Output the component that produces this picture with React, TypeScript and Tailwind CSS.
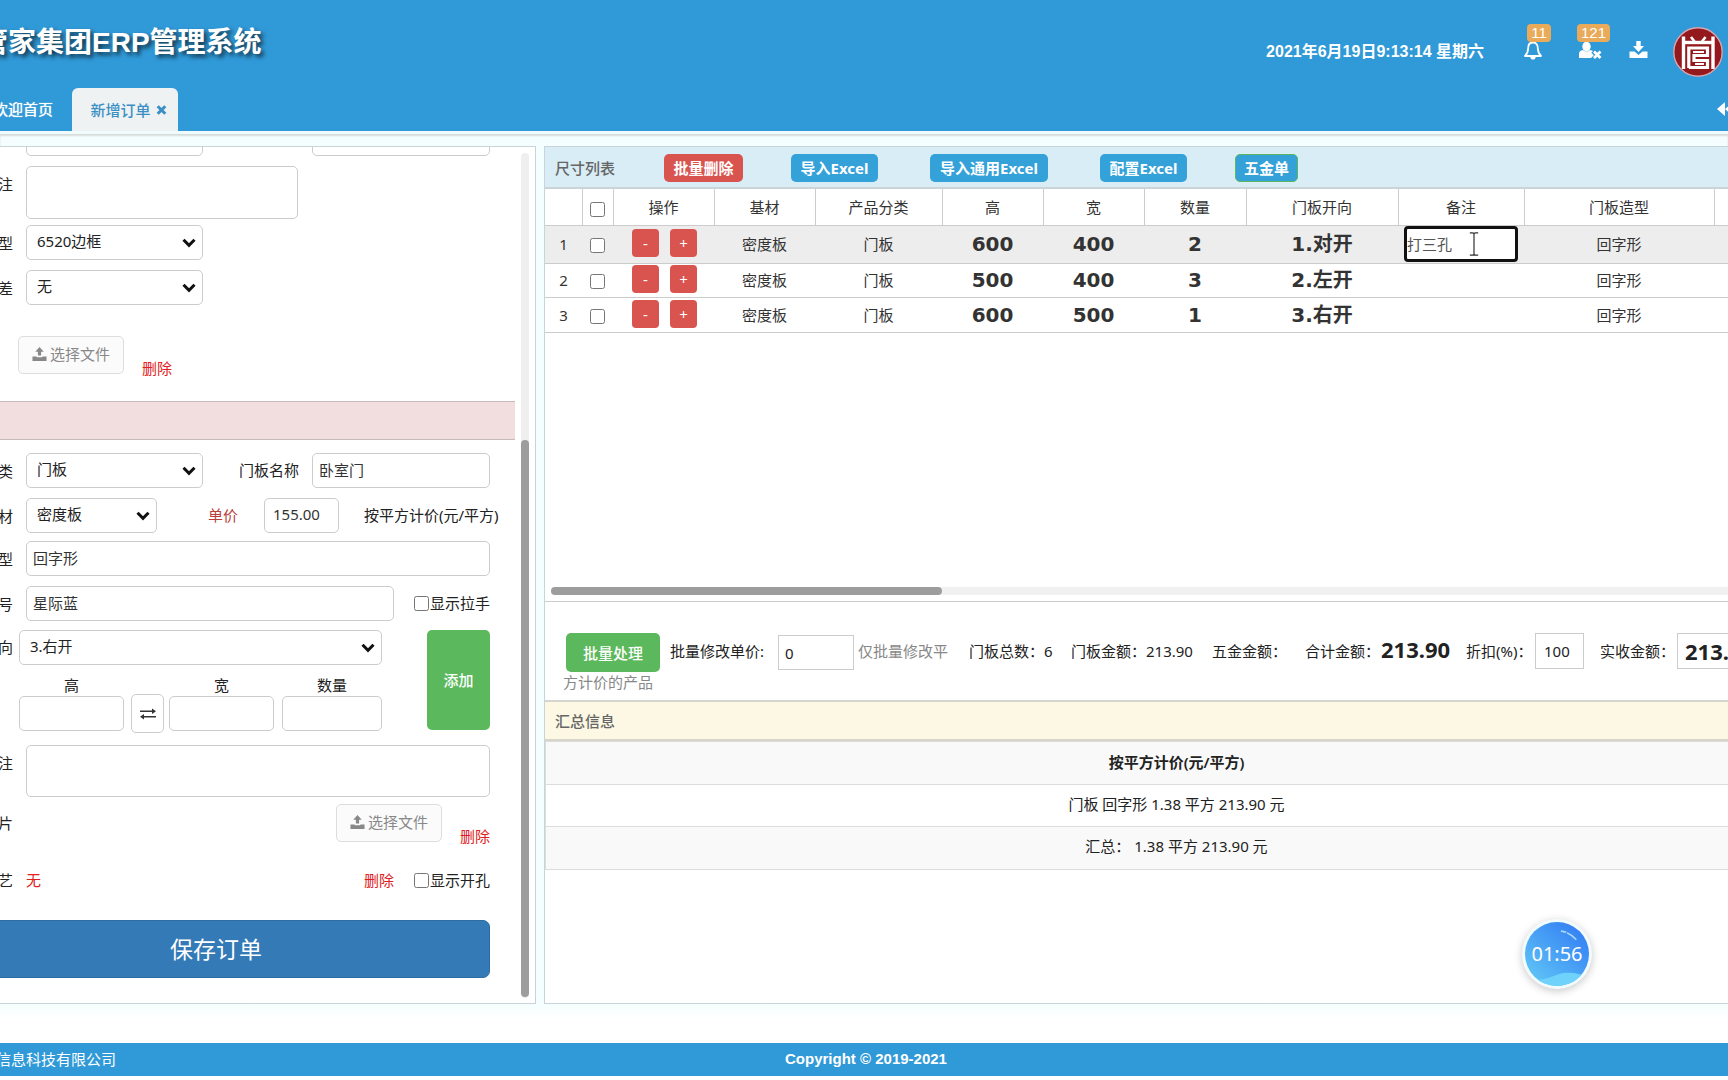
import React from "react";

const inputBase =
  "rounded-[5px] border border-[#ccc] bg-white px-[6px] text-[15px] leading-5 text-[#333] outline-none";

function Label({ children, htmlFor }: { children: React.ReactNode; htmlFor?: string }) {
  return (
    <label htmlFor={htmlFor} className="mr-[13px] flex w-[13px] shrink-0 justify-end whitespace-nowrap text-[15px] leading-5">
      {children}
    </label>
  );
}

function Select({ id, value, className }: { id: string; value: string; className: string }) {
  return (
    <div className={"relative h-[35px] shrink-0 " + className}>
      <select
        id={id}
        aria-label={value}
        defaultValue={value}
        className="h-full w-full appearance-none rounded-[5px] border border-[#ccc] bg-white pb-[2px] pl-[10px] text-[15px] text-[#222] outline-none"
      >
        <option>{value}</option>
      </select>
      <svg viewBox="0 0 14 10" className="pointer-events-none absolute right-[7px] top-[13px] h-[10px] w-[14px]" fill="none">
        <path d="M1.5 1.8 L7 7.4 L12.5 1.8" stroke="#111" strokeWidth="3" />
      </svg>
    </div>
  );
}

function UploadButton() {
  return (
    <button className="flex h-[38px] w-[106px] shrink-0 items-center justify-center gap-[3px] rounded-[5px] border border-[#ddd] bg-[#fbfbfb] pb-[1px] text-[15px] text-[#888]">
      <svg viewBox="0 0 16 16" className="h-[15px] w-[15px]" fill="#888">
        <path d="M8 0 L12.5 5 H9.7 V9 H6.3 V5 H3.5 Z" />
        <path d="M0.5 10 H5 V11 H11 V10 H15.5 V15 H0.5 Z" />
      </svg>
      选择文件
    </button>
  );
}

function Header() {
  return (
    <header className="flex h-[131px] shrink-0 flex-col justify-between overflow-hidden bg-[#3099d7] text-white">
      <div className="flex items-start justify-between pt-[20px]">
        <h1 className="-ml-[20px] whitespace-nowrap pt-[3px] font-['Liberation_Sans','Noto_Sans_CJK_SC',sans-serif] text-[28px] font-bold leading-10 [text-shadow:3px_3px_4px_rgba(0,0,0,0.65)]">
          管家集团ERP管理系统
        </h1>
        <div className="flex items-start pr-[5px]">
          <time className="mr-[39px] mt-[22px] whitespace-nowrap font-['Liberation_Sans','Noto_Sans_CJK_SC',sans-serif] text-[16px] font-bold leading-5">
            2021年6月19日9:13:14 星期六
          </time>
          <button aria-label="通知" className="relative mr-[36px] mt-[21px] h-[20px] w-[20px]">
            <svg viewBox="0 0 20 20" className="h-5 w-5">
              <path d="M10 1.5 C6.5 1.5 5.2 4.3 5.2 7 C5.2 11 4 13 2 15 H18 C16 13 14.8 11 14.8 7 C14.8 4.3 13.5 1.5 10 1.5 Z" fill="none" stroke="#fff" strokeWidth="1.8" strokeLinejoin="round" />
              <path d="M7.3 16 H12.7 C12.7 19.4 7.3 19.4 7.3 16 Z" fill="#fff" />
            </svg>
            <span className="absolute -top-[17px] left-[4px] flex h-[18px] w-[24px] items-center justify-center rounded-[4px] bg-[#e9ab59] font-['Liberation_Sans',sans-serif] text-[15px] leading-4">11</span>
          </button>
          <button aria-label="用户" className="relative mr-[27px] mt-[21px] h-[20px] w-[23px]">
            <svg viewBox="0 0 23 20" className="h-5 w-[23px]">
              <ellipse cx="7.5" cy="5.6" rx="4.2" ry="4.8" fill="#fff" />
              <path d="M0 17 V13 Q0 9.5 4 9 Q7.5 12 11 9 Q13.2 9.3 14 10 L12.4 11.8 L14.8 14.2 L12 17 Z" fill="#fff" />
              <path d="M15 10.5 L21.5 17 M21.5 10.5 L15 17" stroke="#fff" strokeWidth="2.8" />
            </svg>
            <span className="absolute -top-[17px] left-[-2px] flex h-[18px] w-[33px] items-center justify-center rounded-[4px] bg-[#e9ab59] font-['Liberation_Sans',sans-serif] text-[15px] leading-4">121</span>
          </button>
          <button aria-label="下载" className="mr-[25px] mt-[21px] h-[18px] w-[19px]">
            <svg viewBox="0 0 19 18" className="h-[18px] w-[19px]" fill="#fff">
              <path d="M7.3 0 H11.7 V5 H15 L9.5 11 L4 5 H7.3 Z" />
              <path d="M0.5 10.5 H5.5 L9.5 14 L13.5 10.5 H18.5 V16.5 Q18.5 17 18 17 H1 Q0.5 17 0.5 16.5 Z" />
            </svg>
          </button>
          <svg viewBox="0 0 50 50" className="mt-[7px] h-[50px] w-[50px]">
            <circle cx="25" cy="25" r="24.2" fill="#93191d" stroke="#d9a3ae" strokeWidth="1.4" />
            <g stroke="#fff" fill="none" strokeWidth="3">
              <path d="M10.5 42 V9.5 M40 42 V9.5" strokeWidth="3.4" />
              <path d="M10.5 15.5 H40" strokeWidth="3.4" />
              <path d="M18 10 L21.5 14.5 M32.5 10 L29 14.5" strokeWidth="2.6" />
              <path d="M15.8 41 V21 H34.5 V28.5 H21 V33.5 H34.5 V40.5 H15.8" strokeWidth="3.2" />
              <path d="M20 25 H31 M22 37 H31" strokeWidth="1.8" />
            </g>
          </svg>
        </div>
      </div>
      <nav className="flex items-end text-[15px] leading-5">
        <a href="#home" className="-ml-[7px] h-[32px] w-[79px] whitespace-nowrap [text-shadow:0_0_1px_#fff]">欢迎首页</a>
        <a href="#order" className="flex h-[43px] w-[106px] items-center justify-center gap-[5px] rounded-t-[6px] bg-[#eef2f3] pl-[7px] font-medium text-[#3a8fc4]">
          新增订单
          <svg viewBox="0 0 10 10" className="h-[10px] w-[11px]">
            <path d="M1.2 1.2 L8.8 8.8 M8.8 1.2 L1.2 8.8" stroke="#3a8fc4" strokeWidth="3" />
          </svg>
        </a>
        <button aria-label="收起" className="-mr-[5px] mb-[15px] ml-auto h-[14px] w-[16px]">
          <svg viewBox="0 0 16 14" className="h-[14px] w-4" fill="#fff">
            <path d="M8 0 V14 L0 7 Z M16 0 V14 L8 7 Z" />
          </svg>
        </button>
      </nav>
    </header>
  );
}

function OrderForm() {
  return (
    <section className="flex w-[536px] shrink-0 overflow-hidden border-y border-r border-[#c9d3d8] bg-white text-[#222]">
      <form className="w-[515px] shrink-0" onSubmit={(e) => e.preventDefault()}>
        <div className="-mt-[26px] flex pl-[26px]">
          <input aria-label="字段一" className={inputBase + " h-[35px] w-[177px]"} />
          <input aria-label="字段二" className={inputBase + " ml-[109px] h-[35px] w-[178px]"} />
        </div>
        <div className="mt-[10px] flex">
          <div className="pt-[8px]"><Label htmlFor="r1">注</Label></div>
          <textarea id="r1" className={inputBase + " h-[53px] w-[272px] resize-none"} />
        </div>
        <div className="mt-[6px] flex items-center">
          <Label htmlFor="frame">型</Label>
          <Select id="frame" value="6520边框" className="w-[177px]" />
        </div>
        <div className="mt-[10px] flex items-center">
          <Label htmlFor="diff">差</Label>
          <Select id="diff" value="无" className="w-[177px]" />
        </div>
        <div className="mt-[31px] flex items-end pl-[18px]">
          <UploadButton />
          <a href="#del1" className="-mb-1 ml-[18px] text-[15px] leading-5 text-[#e0201c]">删除</a>
        </div>
        <div className="mb-[13px] mt-[27px] h-[39px] border-y border-[#c4bcbc] bg-[#f2dede]" />
        <div className="flex items-center">
          <Label htmlFor="kind">类</Label>
          <Select id="kind" value="门板" className="w-[177px]" />
          <label htmlFor="pname" className="ml-[36px] w-[73px] text-[15px]">门板名称</label>
          <input id="pname" defaultValue="卧室门" className={inputBase + " h-[35px] w-[178px] pb-[3px]"} />
        </div>
        <div className="mt-[10px] flex items-center whitespace-nowrap text-[15px]">
          <Label htmlFor="mat">材</Label>
          <Select id="mat" value="密度板" className="w-[131px]" />
          <label htmlFor="price" className="ml-[51px] w-[56px] text-[#b9403c]">单价</label>
          <input id="price" defaultValue="155.00" className={inputBase + " h-[35px] w-[75px] pb-[3px] pl-2"} />
          <span className="ml-[25px]">按平方计价(元/平方)</span>
        </div>
        <div className="mt-[8px] flex items-center">
          <Label htmlFor="shape">型</Label>
          <input id="shape" defaultValue="回字形" className={inputBase + " h-[35px] w-[464px] pb-[3px]"} />
        </div>
        <div className="mt-[10px] flex items-center">
          <Label htmlFor="color">号</Label>
          <input id="color" defaultValue="星际蓝" className={inputBase + " h-[35px] w-[368px] pb-[3px]"} />
          <label className="ml-[20px] flex items-center text-[15px]">
            <input type="checkbox" className="mr-[1px] h-[15px] w-[15px]" />显示拉手
          </label>
        </div>
        <div className="mt-[9px] flex">
          <div className="w-[382px]">
            <div className="flex items-center">
              <label htmlFor="dir" className="mr-[6px] flex w-[13px] shrink-0 justify-end text-[15px]">向</label>
              <Select id="dir" value="3.右开" className="w-[363px]" />
            </div>
            <div className="flex items-end pl-[19px] pt-[9px] text-[15px]">
              <label className="flex flex-col items-center leading-[22px]">
                高<input className={inputBase + " h-[35px] w-[105px]"} />
              </label>
              <button aria-label="交换" className="-mb-[2px] ml-[7px] flex h-[39px] w-[33px] items-center justify-center rounded-[5px] border border-[#ccc]">
                <svg viewBox="0 0 16 12" className="h-3 w-4" fill="#333">
                  <path d="M0 2.5 H12 V0.5 L16 3.3 L12 6 V4.1 H0 Z" />
                  <path d="M16 8 H4 V6 L0 8.8 L4 11.6 V9.6 H16 Z" />
                </svg>
              </button>
              <label className="ml-[5px] flex flex-col items-center leading-[22px]">
                宽<input className={inputBase + " h-[35px] w-[105px]"} />
              </label>
              <label className="ml-[8px] flex flex-col items-center leading-[22px]">
                数量<input className={inputBase + " h-[35px] w-[100px]"} />
              </label>
            </div>
          </div>
          <button className="ml-[45px] h-[100px] w-[63px] rounded-[5px] bg-[#5cb85c] text-[15px] font-medium text-white">添加</button>
        </div>
        <div className="mt-[14px] flex">
          <div className="pt-[8px]"><Label htmlFor="r2">注</Label></div>
          <textarea id="r2" className={inputBase + " h-[52px] w-[464px] resize-none"} />
        </div>
        <div className="mt-[7px] flex items-center">
          <Label>片</Label>
          <div className="ml-[310px] flex items-end">
            <UploadButton />
            <a href="#del2" className="-mb-1 ml-[18px] whitespace-nowrap text-[15px] leading-5 text-[#e0201c]">删除</a>
          </div>
        </div>
        <div className="mt-[23px] flex h-[30px] items-center text-[15px]">
          <Label>艺</Label>
          <span className="text-[#e0201c]">无</span>
          <a href="#del3" className="ml-[323px] whitespace-nowrap text-[#e0201c]">删除</a>
          <label className="ml-[20px] flex items-center whitespace-nowrap">
            <input type="checkbox" className="mr-[1px] h-[15px] w-[15px]" />显示开孔
          </label>
        </div>
        <button className="-ml-[58px] mb-[25px] mt-[25px] block h-[58px] w-[548px] rounded-[7px] border border-[#2e6da4] bg-[#337ab7] text-[23px] text-white">
          保存订单
        </button>
      </form>
      <div className="mb-[5px] ml-[6px] mt-[6px] w-[8px] shrink-0 rounded-[4px] bg-[#efefef]">
        <div className="mt-[287px] h-[557px] rounded-[4px] bg-[#9d9d9d]" />
      </div>
    </section>
  );
}

const rows = [
  { no: 1, h: 600, w: 400, n: 2, dir: "1.对开", cls: "h-[38px] bg-[#ededed]" },
  { no: 2, h: 500, w: 400, n: 3, dir: "2.左开", cls: "h-[34px]" },
  { no: 3, h: 600, w: 500, n: 1, dir: "3.右开", cls: "h-[35px]" },
];

const heads = ["基材", "产品分类", "高", "宽", "数量", "门板开向", "备注", "门板造型", ""];
const big = "font-['DejaVu_Sans','Noto_Sans_CJK_SC',sans-serif] text-[20px] font-bold leading-6 text-[#333]";

function SizeTable() {
  return (
    <div className="min-h-[413px] overflow-hidden border-b border-[#ccc]">
      <table className="w-full table-fixed border-collapse text-center text-[15px] leading-5 text-[#333]">
        <colgroup>
          <col className="w-[37px]" />
          <col className="w-[31px]" />
          <col className="w-[101px]" />
          <col className="w-[101px]" />
          <col className="w-[127px]" />
          <col className="w-[101px]" />
          <col className="w-[101px]" />
          <col className="w-[102px]" />
          <col className="w-[152px]" />
          <col className="w-[126px]" />
          <col className="w-[190px]" />
          <col />
        </colgroup>
        <thead>
          <tr className="h-[36px] border-b border-[#ccc]">
            <th className="border-r border-[#ccc]" />
            <th className="border-r border-[#ccc] pt-[8px]"><input type="checkbox" aria-label="全选" className="h-[15px] w-[15px]" /></th>
            <th className="border-r border-[#ccc] font-normal">操作</th>
            {heads.map((t, i) => (
              <th key={i} className="border-r border-[#ccc] font-normal">{t}</th>
            ))}
          </tr>
        </thead>
        <tbody>
          {rows.map((r) => (
            <tr key={r.no} className={"border-b border-[#ccc] " + r.cls}>
              <td>{r.no}</td>
              <td className="pt-[6px]"><input type="checkbox" aria-label={"选择" + r.no} className="h-[15px] w-[15px]" /></td>
              <td>
                <div className="flex justify-center gap-[11px] pb-[2px] pl-[2px]">
                  <button className="h-[28px] w-[27px] rounded-[4px] bg-[#d9534f] text-white">-</button>
                  <button className="h-[28px] w-[27px] rounded-[4px] bg-[#d9534f] text-white">+</button>
                </div>
              </td>
              <td>密度板</td>
              <td>门板</td>
              <td className={big}>{r.h}</td>
              <td className={big}>{r.w}</td>
              <td className={big}>{r.n}</td>
              <td className={big}>{r.dir}</td>
              <td>
                {r.no === 1 && (
                  <div className="relative mx-auto h-[36px] w-[114px]">
                    <input aria-label="备注" defaultValue="打三孔" className="h-full w-full rounded-[4px] border-[3px] border-[#111] bg-white pb-[2px] text-[15px] text-[#555] outline-none" />
                    <svg viewBox="0 0 10 26" className="pointer-events-none absolute left-[65px] top-[6px] h-[24px] w-[10px]" fill="none" stroke="#333" strokeWidth="1.3">
                      <path d="M0.5 1 H3.5 Q5 1 5 2.5 V23.5 Q5 25 3.5 25 H0.5 M9.5 1 H6.5 Q5 1 5 2.5 M5 23.5 Q5 25 6.5 25 H9.5" />
                    </svg>
                  </div>
                )}
              </td>
              <td>回字形</td>
              <td />
            </tr>
          ))}
        </tbody>
      </table>
    </div>
  );
}

const chip = "flex h-[28px] items-center justify-center rounded-[5px] text-[15px] font-bold text-white ";

function Workspace() {
  return (
    <section className="-mr-[81px] ml-2 min-w-0 flex-1 border border-[#c9d3d8] bg-white text-[#222]">
      <div className="flex h-[42px] items-center border-b-2 border-[#c9d3d8] bg-[#d9edf7] pl-[10px] pt-[2px]">
        <h2 className="w-[109px] text-[15px] font-medium text-[#666]">尺寸列表</h2>
        <button className={chip + "w-[79px] bg-[#d9534f]"}>批量删除</button>
        <button className={chip + "ml-[48px] w-[87px] bg-[#34a1d9]"}>导入Excel</button>
        <button className={chip + "ml-[52px] w-[118px] bg-[#34a1d9]"}>导入通用Excel</button>
        <button className={chip + "ml-[52px] w-[87px] bg-[#34a1d9]"}>配置Excel</button>
        <button className={chip + "ml-[48px] w-[63px] border border-[#5cb85c] bg-[#34a1d9]"}>五金单</button>
      </div>
      <div className="relative">
        <SizeTable />
        <div className="absolute bottom-[7px] left-[6px] right-[6px] h-[8px] rounded-[4px] bg-[#f1f1f1]">
          <div className="h-full w-[391px] rounded-[4px] bg-[#9d9d9d]" />
        </div>
      </div>
      <div className="flex h-[100px] items-start whitespace-nowrap border-b-2 border-[#d5d5d0] pl-[18px] pt-[31px] text-[15px]">
        <div className="mr-[12px] w-[394px] shrink-0 whitespace-normal leading-[20px]">
          <button className="ml-[3px] h-[39px] w-[94px] rounded-[5px] bg-[#5cb85c] align-middle font-medium text-white">批量处理</button>
          <label htmlFor="batch" className="ml-[10px] mr-[14px]">批量修改单价:</label>
          <input id="batch" defaultValue="0" className="mr-[4px] h-[35px] w-[76px] border border-[#ccc] px-[6px] align-middle text-[15px] outline-none" />
          <span className="text-[#888]">仅批量修改平方计价的产品</span>
        </div>
        <div className="flex h-[36px] items-center">
          <span className="w-[102px]">门板总数：6</span>
          <span className="w-[141px]">门板金额：213.90</span>
          <span className="w-[93px]">五金金额：</span>
          <span className="w-[76px]">合计金额：</span>
          <strong className="w-[85px] pb-[4px] text-[22px] leading-8">213.90</strong>
          <label htmlFor="disc" className="w-[69px]">折扣(%)：</label>
          <input id="disc" defaultValue="100" className="h-[36px] w-[49px] border border-[#ccc] px-2 text-[15px] outline-none" />
          <label htmlFor="real" className="ml-[16px] w-[77px]">实收金额：</label>
          <input id="real" defaultValue="213.90" className="h-[36px] w-[96px] border border-[#ccc] px-[7px] text-[22px] font-bold outline-none" />
        </div>
      </div>
      <h2 className="h-[39px] border-b-2 border-[#d8d5c8] bg-[#fcf8e3] pl-[10px] text-[15px] font-medium leading-[38px] text-[#666]">汇总信息</h2>
      <table className="w-full border-collapse border border-[#ddd] text-center text-[15px]">
        <thead>
          <tr className="h-[43px] border-b border-[#ddd] bg-[#f8f9f8]"><th className="pb-[2px] font-semibold">按平方计价(元/平方)</th></tr>
        </thead>
        <tbody>
          <tr className="h-[42px] border-b border-[#ddd]"><td className="pb-[3px]">门板 回字形 1.38 平方 213.90 元</td></tr>
          <tr className="h-[43px] bg-[#f8f9f8]"><td className="pb-[4px]">汇总： 1.38 平方 213.90 元</td></tr>
        </tbody>
      </table>
    </section>
  );
}

export default function App() {
  return (
    <div className="relative flex min-h-screen w-full flex-col overflow-hidden bg-white font-['Noto_Sans','Noto_Sans_CJK_SC',sans-serif]">
      <Header />
      <div className="h-[15px] shrink-0 border-t-[3px] border-[#f0fbfd] bg-[#f5fefe] shadow-[inset_0_2px_2px_#d5dcd8]" />
      <main className="flex bg-[#f5fefe]">
        <OrderForm />
        <Workspace />
      </main>
      <div className="min-h-[38px] flex-1 bg-gradient-to-b from-[#f5fefe] to-white to-40%" />
      <footer className="mb-1 flex h-[33px] shrink-0 items-center bg-[#3099d7] pb-[1px] text-[15px] text-white">
        <span className="-ml-[4px] w-[789px] whitespace-nowrap">信息科技有限公司</span>
        <span className="font-['Liberation_Sans',sans-serif] font-bold">Copyright © 2019-2021</span>
      </footer>
      <div className="absolute bottom-[91px] right-[136px] flex h-[70px] w-[70px] items-center justify-center rounded-full bg-[#f2fcff] shadow-[0_2px_8px_rgba(0,0,0,0.22)]">
        <svg viewBox="0 0 63 63" className="absolute left-[3px] top-[3px] h-[64px] w-[64px]">
          <defs>
            <linearGradient id="ball" x1="0.1" y1="0.9" x2="0.8" y2="0.1">
              <stop offset="0" stopColor="#5fc4f6" />
              <stop offset="1" stopColor="#3683f4" />
            </linearGradient>
            <clipPath id="disc-clip"><circle cx="31.5" cy="31.5" r="31.5" /></clipPath>
          </defs>
          <g clipPath="url(#disc-clip)">
            <rect width="63" height="63" fill="url(#ball)" />
            <path d="M10 57 C26 57 30 50 42 50 C50 50 54 51 60 54 V63 H10 Z" fill="#6fd2fb" />
            <path d="M36 9 L40 10 M42 11 Q47 13 50 17" stroke="#a5d6fb" strokeWidth="1.6" fill="none" strokeLinecap="round" />
          </g>
        </svg>
        <span className="relative text-[20px] leading-6 text-white">01:56</span>
      </div>
    </div>
  );
}
